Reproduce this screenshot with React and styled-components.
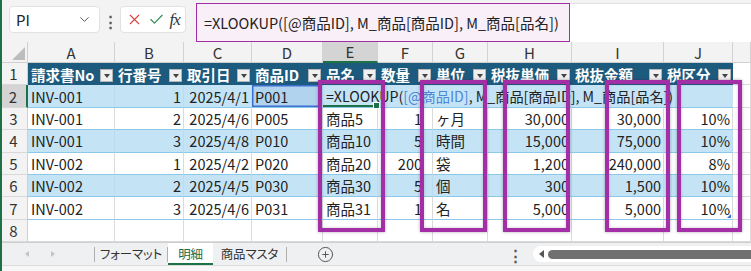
import React from "react";
import styled, { createGlobalStyle } from "styled-components";
import { ChevronDown, X, Check, CirclePlus } from "lucide-react";

const GREEN = "#1e7145";
const PURPLE = "#a22fa5";
const BAND = "#c4e4f5";
const TABLE_LINE = "#8cc8ea";
const GRID = "#dadada";
const NAVY = "#1d5b7e";

const GlobalStyle = createGlobalStyle`
  * { box-sizing: border-box; }
  body {
    margin: 0;
    background: #fff;
    font-family: "Noto Sans CJK JP", "Noto Sans", sans-serif;
  }
`;

const Frame = styled.div`
  position: relative;
  width: 751px;
  height: 271px;
  overflow: hidden;
  background: #f3f3f3;

  &::before {
    content: "";
    position: absolute;
    left: 0;
    top: 0;
    bottom: 0;
    width: 2px;
    background: ${GREEN};
    z-index: 5;
  }
`;

/* formula bar */
const Toolbar = styled.div`
  display: flex;
  align-items: flex-start;
  height: 42px;
  padding-left: 9px;
  background: #f3f3f3;
`;

const NameBox = styled.div`
  margin-top: 6px;
  width: 91px;
  height: 27px;
  background: #fff;
  border: 1px solid #e2e2e2;
  border-radius: 4px;
  display: flex;
  align-items: center;
  justify-content: space-between;
  padding: 0 7px 0 6px;
  font-size: 15px;
  color: #222;
`;

const Kebab = styled.span`
  width: 20px;
  text-align: center;
  margin-top: ${({ $top }) => $top || 0}px;
  color: #555;
  font-size: 15px;
  font-weight: 700;
  line-height: 1;
`;

const FxBox = styled.div`
  margin-top: 6px;
  width: 66px;
  height: 27px;
  background: #fff;
  border: 1px solid #e2e2e2;
  border-radius: 4px;
  display: flex;
  align-items: center;
  justify-content: space-around;
  padding: 0 3px;
`;

const Fx = styled.span`
  font-family: "Liberation Serif", serif;
  font-style: italic;
  font-size: 17px;
  color: #333;
  letter-spacing: -1px;
`;

const FormulaField = styled.div`
  margin-left: 10px;
  margin-top: 3px;
  flex: 1;
  height: 39px;
  background: #fff;
  border-top: 1px solid #e0e0e0;
  display: flex;
`;

const FormulaHighlight = styled.div`
  width: 374px;
  height: 39px;
  margin-top: -1px;
  background: #f8eff8;
  border: 1.5px solid ${PURPLE};
  display: flex;
  align-items: center;
  padding-left: 7px;
  font-size: 14.5px;
  color: #222;
  white-space: nowrap;
`;

/* grid */
const Sheet = styled.div`
  display: grid;
  grid-template-columns: 28px 87px 69px 68px 71px 55px 55px 55px 84px 92px 69px 18px;
  grid-template-rows: 21px repeat(8, 22.4px);
  background: #fff;
`;

const Corner = styled.div`
  display: flex;
  align-items: flex-end;
  justify-content: flex-end;
  padding: 0 2px 2px 0;
  background: #f3f3f3;
  border-right: 1px solid #cfcfcf;
  border-bottom: 1px solid #cfcfcf;

  &::after {
    content: "";
    border-left: 13px solid transparent;
    border-bottom: 13px solid #bdbdbd;
  }
`;

const ColHead = styled.div`
  display: flex;
  align-items: center;
  justify-content: center;
  background: ${({ $active }) => ($active ? "#d4d4d4" : "#f3f3f3")};
  border-right: 1px solid #d2d2d2;
  border-bottom: ${({ $active }) => ($active ? `2px solid ${GREEN}` : "1px solid #cfcfcf")};
  color: #333;
  font-size: 15px;
`;

const RowHead = styled.div`
  display: flex;
  align-items: center;
  justify-content: center;
  background: ${({ $active }) => ($active ? "#d4d4d4" : "#f3f3f3")};
  border-right: ${({ $active }) => ($active ? `2px solid ${GREEN}` : "1px solid #cfcfcf")};
  border-bottom: 1px solid #d9d9d9;
  color: #333;
  font-size: 15px;
`;

const HeadCell = styled.div`
  display: flex;
  align-items: center;
  justify-content: space-between;
  background: ${NAVY};
  color: #fff;
  font-weight: 700;
  font-size: 14.5px;
  padding: 0 2px 0 3px;
  white-space: nowrap;
  overflow: hidden;
`;

const Filter = styled.span`
  flex-shrink: 0;
  width: 13px;
  height: 13px;
  align-self: flex-end;
  margin-bottom: 3px;
  background: #f0f0f0;
  border: 1px solid #b5b5b5;
  display: flex;
  align-items: center;
  justify-content: center;

  &::after {
    content: "";
    border-left: 3.5px solid transparent;
    border-right: 3.5px solid transparent;
    border-top: 4px solid #444;
  }
`;

const Cell = styled.div`
  position: relative;
  display: flex;
  align-items: center;
  justify-content: ${({ $right }) => ($right ? "flex-end" : "flex-start")};
  padding: 0 ${({ $pr }) => $pr || 2}px 0 3px;
  font-size: 14.5px;
  color: #222;
  white-space: nowrap;
  overflow: hidden;
  background: ${({ $band }) => ($band ? BAND : "#fff")};
  border-right: 1px solid
    ${({ $band, $bare }) => ($bare ? BAND : $band ? "#b9dcf0" : GRID)};
  border-bottom: 1px solid ${({ $table }) => ($table ? TABLE_LINE : GRID)};

  ${({ $handle }) =>
    $handle &&
    `&::after {
      content: "";
      position: absolute;
      right: 1px;
      bottom: 1px;
      border-left: 4px solid transparent;
      border-bottom: 4px solid #2f6fd0;
    }`}
`;

const RefCell = styled(Cell)`
  background: #b2d3ee;
  box-shadow: inset 0 0 0 1.5px #3c6fd1;
`;

const EditCell = styled(Cell)`
  overflow: visible;
  z-index: 2;
  font-size: 14.2px;
  box-shadow: inset 0 -2px 0 ${GREEN};

  &::after {
    content: "";
    position: absolute;
    right: -3px;
    bottom: -2px;
    width: 5px;
    height: 5px;
    background: ${GREEN};
    border: 1px solid #fff;
  }
`;

const RefText = styled.span`
  color: #4f86d6;
`;

/* annotation boxes */
const Marks = styled.div`
  position: absolute;
  inset: 0;
  pointer-events: none;
  z-index: 4;
`;

const Mark = styled.div`
  position: absolute;
  top: 80px;
  height: 152px;
  left: ${({ $x }) => $x}px;
  width: ${({ $w }) => $w}px;
  border: 4px solid ${PURPLE};
  box-shadow: 0 0 3px rgba(60, 0, 60, 0.35), inset 0 0 3px rgba(60, 0, 60, 0.25);
`;

/* sheet tabs */
const TabBar = styled.div`
  height: 23px;
  display: flex;
  align-items: stretch;
  background: #eef0f2;
  border-top: 1px solid #cfcfcf;
  font-size: 12.5px;
  color: #333;
`;

const NavArea = styled.div`
  width: 94px;
  display: flex;
  align-items: center;
  padding-left: 25px;
  gap: 22px;
`;

const NavArrow = styled.span`
  width: 0;
  height: 0;
  border-top: 3.5px solid transparent;
  border-bottom: 3.5px solid transparent;
  ${({ $dir }) =>
    $dir === "left" ? "border-right: 4px solid #c4c4c4;" : "border-left: 4px solid #c4c4c4;"}
`;

const Sep = styled.span`
  width: 1px;
  margin: 4px 0 3px;
  background: #b0b0b0;
`;

const Tab = styled.div`
  display: flex;
  align-items: center;
  justify-content: center;
  width: ${({ $w }) => $w}px;
  font-feature-settings: "palt";
  letter-spacing: -0.2px;
  background: ${({ $active }) => ($active ? "#fff" : "transparent")};
  color: ${({ $active }) => ($active ? "#1b6a45" : "#333")};
  border-bottom: 2px solid ${({ $active }) => ($active ? GREEN : "transparent")};
`;

const AddSheet = styled.div`
  display: flex;
  align-items: center;
  margin-left: 30px;
  color: #555;
`;

const Spacer = styled.div`
  flex: 1;
`;

const ScrollTrack = styled.div`
  width: 218px;
  margin: 3px 0 3px 8px;
  background: #fff;
  border-radius: 8px 0 0 8px;
  display: flex;
  align-items: center;
  padding-left: 6px;
  gap: 4px;
`;

const ScrollArrow = styled.span`
  border-top: 4px solid transparent;
  border-bottom: 4px solid transparent;
  border-right: 5px solid #555;
`;

const Thumb = styled.div`
  flex: 1;
  height: 9px;
  background: #707070;
  border-radius: 5px 0 0 5px;
`;

const Footer = styled.div`
  height: 6px;
  background: #f7f7f7;
  border-top: 1px solid #dcdcdc;
`;

const COLS = ["A", "B", "C", "D", "E", "F", "G", "H", "I", "J"];
const HEADERS = ["請求書No", "行番号", "取引日", "商品ID", "品名", "数量", "単位", "税抜単価", "税抜金額", "税区分"];
const RIGHT = [false, true, true, false, false, true, false, true, true, true];
const PAD_RIGHT = [2, 2, 2, 2, 2, 10, 2, 2, 2, 2];

const DATA = [
  ["INV-001", "2", "2025/4/6", "P005", "商品5", "1", "ヶ月", "30,000", "30,000", "10%"],
  ["INV-001", "3", "2025/4/8", "P010", "商品10", "5", "時間", "15,000", "75,000", "10%"],
  ["INV-002", "1", "2025/4/2", "P020", "商品20", "200", "袋", "1,200", "240,000", "8%"],
  ["INV-002", "2", "2025/4/5", "P030", "商品30", "5", "個", "300", "1,500", "10%"],
  ["INV-002", "3", "2025/4/6", "P031", "商品31", "1", "名", "5,000", "5,000", "10%"],
];

const MARKS = [
  { x: 318, w: 67 },
  { x: 420, w: 67 },
  { x: 503, w: 67 },
  { x: 605, w: 65 },
  { x: 677, w: 65 },
];

const FORMULA = "=XLOOKUP([@商品ID], M_商品[商品ID], M_商品[品名])";

const App = () => {
  return (
    <>
      <GlobalStyle />
      <Frame>
        <Toolbar>
          <NameBox>
            <span>PI</span>
            <ChevronDown size={15} color="#555" strokeWidth={1.6} />
          </NameBox>
          <Kebab $top={13}>⋮</Kebab>
          <FxBox>
            <X size={17} color="#d9433c" strokeWidth={1.6} />
            <Check size={17} color="#2e8b4f" strokeWidth={1.6} />
            <Fx>fx</Fx>
          </FxBox>
          <FormulaField>
            <FormulaHighlight>{FORMULA}</FormulaHighlight>
          </FormulaField>
        </Toolbar>

        <Sheet>
          <Corner />
          {COLS.map((c) => (
            <ColHead key={c} $active={c === "E"}>
              {c}
            </ColHead>
          ))}
          <ColHead />

          <RowHead>1</RowHead>
          {HEADERS.map((h) => (
            <HeadCell key={h}>
              <span>{h}</span>
              <Filter />
            </HeadCell>
          ))}
          <Cell />

          <RowHead $active>2</RowHead>
          <Cell $band $table>INV-001</Cell>
          <Cell $band $table $right>1</Cell>
          <Cell $band $table $right>2025/4/1</Cell>
          <RefCell $band $table>P001</RefCell>
          <EditCell $band $table $bare>
            =XLOOKUP(<RefText>[@商品ID]</RefText>, M_商品[商品ID], M_商品[品名])
          </EditCell>
          {[0, 1, 2, 3, 4].map((i) => (
            <Cell key={i} $band $table $bare />
          ))}
          <Cell />

          {DATA.map((row, r) => {
            const band = r % 2 === 1;
            return (
              <React.Fragment key={r}>
                <RowHead>{r + 3}</RowHead>
                {row.map((v, i) => (
                  <Cell
                    key={i}
                    $band={band}
                    $table
                    $right={RIGHT[i]}
                    $pr={PAD_RIGHT[i]}
                    $handle={r === DATA.length - 1 && i === row.length - 1}
                  >
                    {v}
                  </Cell>
                ))}
                <Cell />
              </React.Fragment>
            );
          })}

          <RowHead>8</RowHead>
          {COLS.map((c) => (
            <Cell key={c} />
          ))}
          <Cell />
        </Sheet>

        <TabBar>
          <NavArea>
            <NavArrow $dir="left" />
            <NavArrow $dir="right" />
          </NavArea>
          <Sep />
          <Tab $w={72}>フォーマット</Tab>
          <Sep />
          <Tab $w={45} $active>明細</Tab>
          <Tab $w={73}>商品マスタ</Tab>
          <Sep />
          <AddSheet>
            <CirclePlus size={17} strokeWidth={1.4} />
          </AddSheet>
          <Spacer />
          <Kebab $top={4}>⋮</Kebab>
          <ScrollTrack>
            <ScrollArrow />
            <Thumb />
          </ScrollTrack>
        </TabBar>
        <Footer />

        <Marks>
          {MARKS.map((m) => (
            <Mark key={m.x} $x={m.x} $w={m.w} />
          ))}
        </Marks>
      </Frame>
    </>
  );
};

export default App;
